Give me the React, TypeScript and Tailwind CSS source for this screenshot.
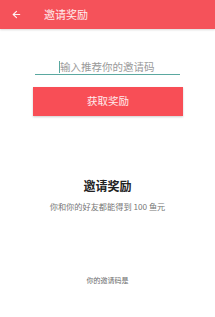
import { ArrowLeft } from 'lucide-react';

export default function App() {
  return (
    <div
      className="w-[215px] h-[317px] bg-white flex flex-col overflow-hidden"
      style={{ fontFamily: '"Noto Sans CJK SC", "Noto Sans", sans-serif' }}
    >
      {/* Header */}
      <div className="h-[29px] bg-[#f5525a] flex items-center shadow-[0_1px_2px_rgba(0,0,0,0.15)] shrink-0">
        <ArrowLeft size={11} strokeWidth={2.5} className="ml-[11px] text-white/90" />
        <span className="ml-[22px] text-[11px] text-white/90 leading-none">邀请奖励</span>
      </div>

      {/* Input */}
      <div className="mt-[31px] mx-[35px] w-[145px] h-[15px] border-b-[1.5px] border-[#5aa8a0] flex items-end pb-[1px]">
        <span className="ml-[24px] w-[1px] h-[12px] bg-[#5aa8a0]" />
        <span className="text-[10.5px] leading-none text-[#9a9a9a] mb-[1px]">输入推荐你的邀请码</span>
      </div>

      {/* Button */}
      <div className="mt-[12px] mx-[33px] w-[150px] h-[29px] bg-[#f84e56] shadow-[0_1px_2px_rgba(0,0,0,0.2)] flex items-center justify-center">
        <span className="text-[10.5px] text-white/90 leading-none">获取奖励</span>
      </div>

      {/* Info */}
      <div className="mt-[64px] flex flex-col items-center">
        <span className="text-[12px] font-bold text-[#222] leading-none">邀请奖励</span>
        <span className="mt-[10px] text-[8.2px] text-[#777] leading-none">你和你的好友都能得到 100 鱼元</span>
      </div>

      <div className="mt-[67px] flex justify-center">
        <span className="text-[7px] text-[#666] leading-none">你的邀请码是</span>
      </div>
    </div>
  );
}
